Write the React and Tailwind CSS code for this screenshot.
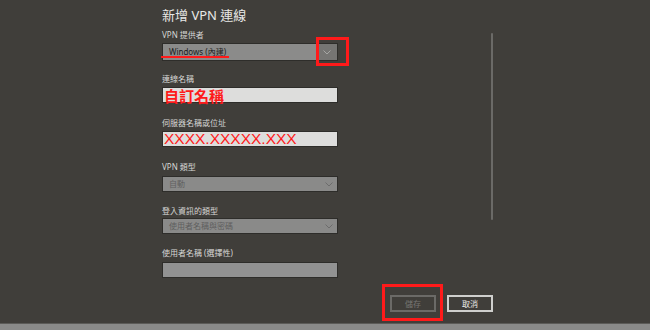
import React from "react";

const font = { fontFamily: '"Noto Sans", "Noto Sans CJK TC", sans-serif' };

function Chevron({ color }) {
  return (
    <svg width="8" height="5" viewBox="0 0 8 5" className="block">
      <path d="M0.5 0.5 L4 4 L7.5 0.5" fill="none" stroke={color} strokeWidth="1" />
    </svg>
  );
}

function Label({ children, className = "" }) {
  return (
    <div className={"h-[10px] text-[8px] leading-[10px] text-[#d6d6d4] whitespace-nowrap " + className}>
      {children}
    </div>
  );
}

export default function App() {
  return (
    <div className="w-[650px] h-[330px] bg-[#403e3a] flex flex-col overflow-hidden relative" style={font}>
      <div className="flex h-[295px]">
        <div className="ml-[162px] w-[176px] flex flex-col">
          <div className="mt-[7px] h-[16px] text-[13px] leading-[16px] text-[#e8e8e6] whitespace-nowrap">
            新增 VPN 連線
          </div>

          <Label className="mt-[7px]">VPN 提供者</Label>
          <div className="mt-[3px] h-[18px] flex border border-[#2e2d2a] bg-[#8b8b8a]">
            <div className="flex-1 flex items-center pl-[6px] text-[8px] text-[#1c1c1c] whitespace-nowrap">
              Windows (內建)
            </div>
            <div className="w-[20px] bg-[#767573] flex items-center justify-center">
              <Chevron color="#a6a6a4" />
            </div>
          </div>

          <Label className="mt-[13px]">連線名稱</Label>
          <div className="mt-[3px] h-[16px] border border-[#2e2d2a] bg-[#dddddc] flex items-center pl-[1px]">
            <span
              className="text-[15px] leading-[15px] font-bold text-[#ff1a1a] whitespace-nowrap"
              style={{ fontFamily: '"Noto Sans CJK TC", sans-serif' }}
            >
              自訂名稱
            </span>
          </div>

          <Label className="mt-[15px]">伺服器名稱或位址</Label>
          <div className="mt-[3px] h-[16px] border border-[#2e2d2a] bg-[#dddddc] flex items-center pl-[1px]">
            <span
              className="text-[15.5px] leading-[16px] text-[#ff1a1a] whitespace-nowrap"
              style={{ fontFamily: '"Liberation Sans", Arial, sans-serif' }}
            >
              XXXX.XXXXX.XXX
            </span>
          </div>

          <Label className="mt-[15px]">VPN 類型</Label>
          <div className="mt-[4px] h-[16px] border border-[#2e2d2a] bg-[#8a8a89] flex items-center pl-[6px] pr-[4px]">
            <span className="flex-1 text-[8px] text-[#606060] whitespace-nowrap">自動</span>
            <Chevron color="#6c6c6c" />
          </div>

          <Label className="mt-[14px]">登入資訊的類型</Label>
          <div className="mt-[2px] h-[16px] border border-[#2e2d2a] bg-[#8a8a89] flex items-center pl-[6px] pr-[4px]">
            <span className="flex-1 text-[8px] text-[#5e5e5e] whitespace-nowrap">使用者名稱與密碼</span>
            <Chevron color="#6c6c6c" />
          </div>

          <Label className="mt-[14px]">使用者名稱 (選擇性)</Label>
          <div className="mt-[4px] h-[16px] border border-[#2e2d2a] bg-[#929292]" />
        </div>

        <div className="ml-[153px] mt-[33px] w-[2px] h-[187px] bg-[#6b6a67] rounded-full" />
      </div>

      <div className="flex gap-[11px] pl-[390px] h-[28px]">
        <div className="w-[46px] h-[17px] border-2 border-[#6b6a67] flex items-center justify-center text-[8px] text-[#777673]">
          儲存
        </div>
        <div className="w-[46px] h-[17px] border-2 border-[#cfcfcd] flex items-center justify-center text-[8px] text-[#ececea]">
          取消
        </div>
      </div>

      <div className="h-[7px] border-t border-[#5c5b58] bg-[#8a8a89]" />

      {/* red annotations */}
      <div className="absolute left-[161px] top-[56px] w-[68px] h-[2px] bg-[#ff1a1a]" />
      <div className="absolute left-[316px] top-[37px] w-[33px] h-[29px] border-[3px] border-[#ff1a1a]" />
      <div className="absolute left-[382px] top-[284px] w-[61px] h-[37px] border-[3px] border-[#ff1a1a]" />
    </div>
  );
}
